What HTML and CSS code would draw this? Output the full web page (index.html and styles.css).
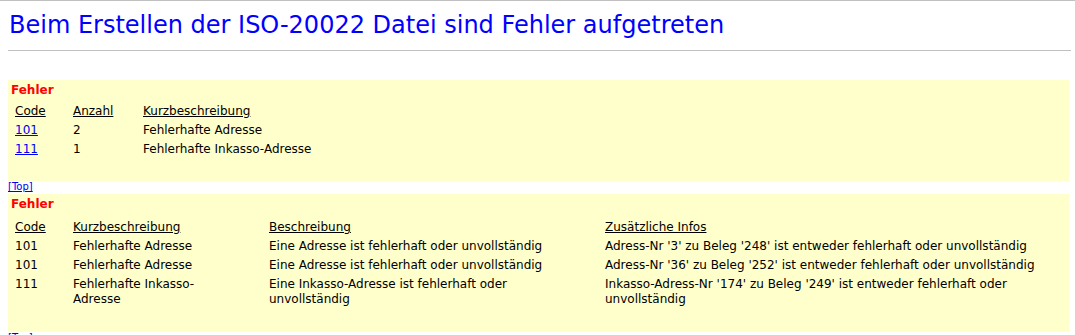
FILE: index.html
```html
<!DOCTYPE html>
<html lang="de">

<head>
    <meta charset="UTF-8">
    <title>ISO-20022 Fehler</title>
    <link rel="stylesheet" href="styles.css">
</head>

<body>
    <div class="page">
        <h1 class="title">Beim Erstellen der ISO-20022 Datei sind Fehler aufgetreten</h1>
        <hr class="rule">

        <div class="block summary">
            <div class="block-title">Fehler</div>
            <table class="errors">
                <colgroup>
                    <col class="w-code">
                    <col class="w-count">
                    <col>
                </colgroup>
                <tr>
                    <th>Code</th>
                    <th>Anzahl</th>
                    <th>Kurzbeschreibung</th>
                </tr>
                <tr>
                    <td><a href="#e101">101</a></td>
                    <td>2</td>
                    <td>Fehlerhafte Adresse</td>
                </tr>
                <tr>
                    <td><a href="#e111">111</a></td>
                    <td>1</td>
                    <td>Fehlerhafte Inkasso-Adresse</td>
                </tr>
            </table>
        </div>
        <a class="top" href="#">[Top]</a>

        <div class="block detail">
            <div class="block-title">Fehler</div>
            <table class="errors">
                <colgroup>
                    <col class="w-code">
                    <col class="w-short">
                    <col class="w-desc">
                    <col>
                </colgroup>
                <tr>
                    <th>Code</th>
                    <th class="narrow-short">Kurzbeschreibung</th>
                    <th class="narrow-desc">Beschreibung</th>
                    <th>Zusätzliche Infos</th>
                </tr>
                <tr id="e101">
                    <td>101</td>
                    <td class="narrow-short">Fehlerhafte Adresse</td>
                    <td class="narrow-desc">Eine Adresse ist fehlerhaft oder unvollständig</td>
                    <td>Adress-Nr '3' zu Beleg '248' ist entweder fehlerhaft oder unvollständig</td>
                </tr>
                <tr>
                    <td>101</td>
                    <td class="narrow-short">Fehlerhafte Adresse</td>
                    <td class="narrow-desc">Eine Adresse ist fehlerhaft oder unvollständig</td>
                    <td>Adress-Nr '36' zu Beleg '252' ist entweder fehlerhaft oder unvollständig</td>
                </tr>
                <tr id="e111">
                    <td>111</td>
                    <td class="narrow-short">Fehlerhafte Inkasso-Adresse</td>
                    <td class="narrow-desc">Eine Inkasso-Adresse ist fehlerhaft oder unvollständig</td>
                    <td>Inkasso-Adress-Nr '174' zu Beleg '249' ist entweder fehlerhaft oder unvollständig</td>
                </tr>
            </table>
        </div>
        <a class="top" href="#">[Top]</a>
    </div>
</body>

</html>
```

FILE: styles.css
```css
html {
    border-top: 1px solid #c0c0c0;
}

body {
    margin: 0;
    font-family: "DejaVu Sans", Verdana, sans-serif;
    font-size: 12px;
    color: #000000;
}

.page {
    width: 1063px;
    padding-left: 8px;
}

.title {
    margin: 0;
    padding: 10px 0 0 1px;
    font-size: 24px;
    line-height: 28px;
    font-weight: normal;
    color: #0000ff;
}

.rule {
    margin: 11px 0 29px 0;
    border: 0;
    border-top: 1px solid #c0c0c0;
}

.block {
    background: #ffffcc;
    width: 1061px;
    padding: 3px 0 22px 0;
}

.detail {
    padding-bottom: 23px;
}

.block-title {
    color: #ff0000;
    font-weight: bold;
    line-height: 15px;
    padding-left: 3px;
}

.errors {
    table-layout: fixed;
    border-collapse: collapse;
    width: 1057px;
    margin: 4px 0 0 4px;
}

.detail .errors {
    margin-top: 6px;
}

.errors th,
.errors td {
    text-align: left;
    vertical-align: top;
    padding: 2px 3px;
    line-height: 15px;
    font-weight: normal;
}

.errors th {
    text-decoration: underline;
}

.errors a {
    color: #0000ee;
}

.w-code {
    width: 58px;
}

.w-count {
    width: 70px;
}

.w-short {
    width: 196px;
}

.w-desc {
    width: 336px;
}

/* keep long texts in the middle columns wrapping early */
.errors .narrow-short {
    padding-right: 50px;
}

.errors .narrow-desc {
    padding-right: 30px;
}

.top {
    display: block;
    height: 13px;
    font-size: 10px;
    line-height: 12px;
    color: #0000ee;
}
```
